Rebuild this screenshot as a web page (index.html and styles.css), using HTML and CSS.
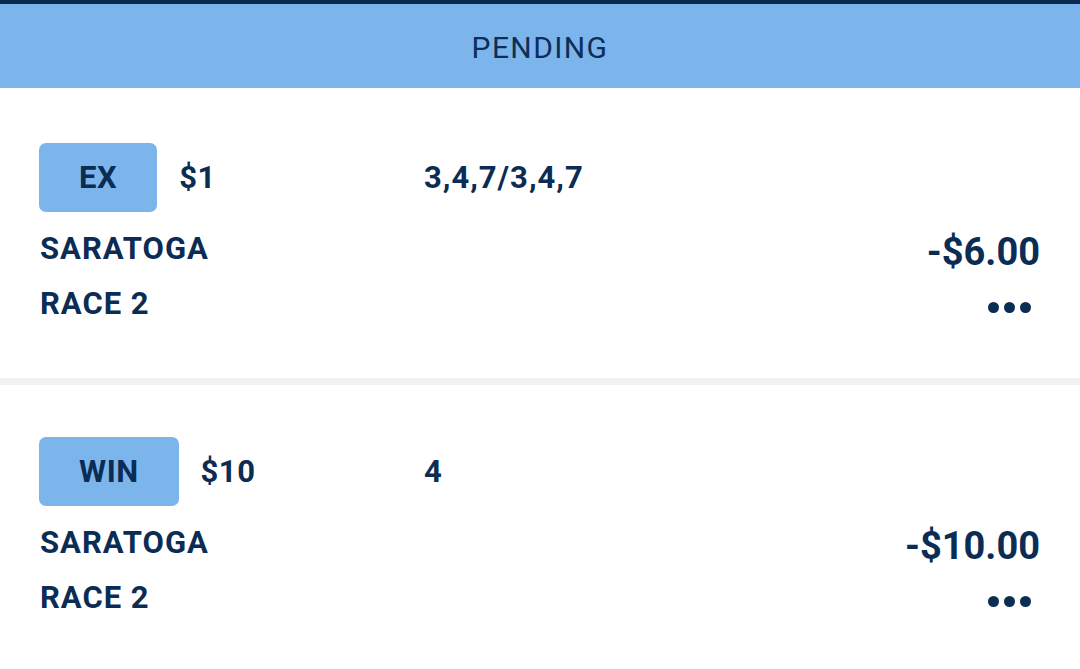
FILE: index.html
```html
<!DOCTYPE html>
<html lang="en">
<head>
    <meta charset="UTF-8">
    <meta name="viewport" content="width=device-width, initial-scale=1.0">
    <title>Pending bets</title>
    <link rel="stylesheet" href="styles.css">
</head>
<body>
    <div class="top-bar"></div>
    <div class="tab-header">PENDING</div>

    <div class="bet-list">
        <div class="bet">
            <div class="bet-top">
                <div class="bet-wager">
                    <span class="bet-type">EX</span>
                    <span class="bet-stake">$1</span>
                </div>
                <span class="bet-picks">3,4,7/3,4,7</span>
            </div>
            <div class="bet-info">
                <div class="bet-race">
                    <div>SARATOGA</div>
                    <div>RACE 2</div>
                </div>
                <div class="bet-result">
                    <div class="bet-amount">-$6.00</div>
                    <div class="bet-more">
                        <svg width="43" height="11" viewBox="0 0 43 11"><circle cx="5.5" cy="5.5" r="5.5"/><circle cx="21.5" cy="5.5" r="5.5"/><circle cx="37.5" cy="5.5" r="5.5"/></svg>
                    </div>
                </div>
            </div>
        </div>

        <div class="bet">
            <div class="bet-top">
                <div class="bet-wager">
                    <span class="bet-type">WIN</span>
                    <span class="bet-stake">$10</span>
                </div>
                <span class="bet-picks">4</span>
            </div>
            <div class="bet-info">
                <div class="bet-race">
                    <div>SARATOGA</div>
                    <div>RACE 2</div>
                </div>
                <div class="bet-result">
                    <div class="bet-amount">-$10.00</div>
                    <div class="bet-more">
                        <svg width="43" height="11" viewBox="0 0 43 11"><circle cx="5.5" cy="5.5" r="5.5"/><circle cx="21.5" cy="5.5" r="5.5"/><circle cx="37.5" cy="5.5" r="5.5"/></svg>
                    </div>
                </div>
            </div>
        </div>
    </div>
</body>
</html>
```

FILE: styles.css
```css
body {
    font-family: Roboto, "Noto Sans", sans-serif;
    background-color: #fff;
    color: #0b2c53;
    margin: 0;
    padding: 0;
    overflow: hidden;
}
.top-bar {
    height: 4px;
    background: #0b2a4f;
}
.tab-header {
    background: #7cb5ec;
    height: 84px;
    line-height: 87px;
    text-align: center;
    font-size: 30px;
    letter-spacing: 1.4px;
    color: #0d2f57;
}
.bet-list {
    padding-top: 3px;
}
.bet {
    padding: 52px 40px 43px 39px;
    border-bottom: 7px solid #f1f1f1;
    font-weight: 700;
    font-size: 31px;
    letter-spacing: 1px;
}
.bet-top {
    display: grid;
    grid-template-columns: 385px 1fr;
    align-items: center;
}
.bet-wager {
    display: flex;
    align-items: center;
    gap: 22px;
}
.bet-type {
    display: inline-block;
    background: #7cb5ec;
    border-radius: 7px;
    height: 69px;
    line-height: 70px;
    padding: 0 40px;
    font-size: 31px;
    letter-spacing: 0.5px;
}
.bet-stake {
    letter-spacing: 0.5px;
}
.bet-info {
    display: flex;
    justify-content: space-between;
    margin-top: 9px;
    padding-left: 1px;
}
.bet-race div {
    line-height: 55px;
}
.bet-result {
    padding-top: 4px;
    text-align: right;
}
.bet-amount {
    font-size: 38px;
    line-height: 55px;
    letter-spacing: 0;
}
.bet-more {
    display: flex;
    justify-content: flex-end;
    align-items: center;
    height: 55px;
    margin-right: 9px;
}
.bet-more svg {
    fill: #0b2c53;
}
```
